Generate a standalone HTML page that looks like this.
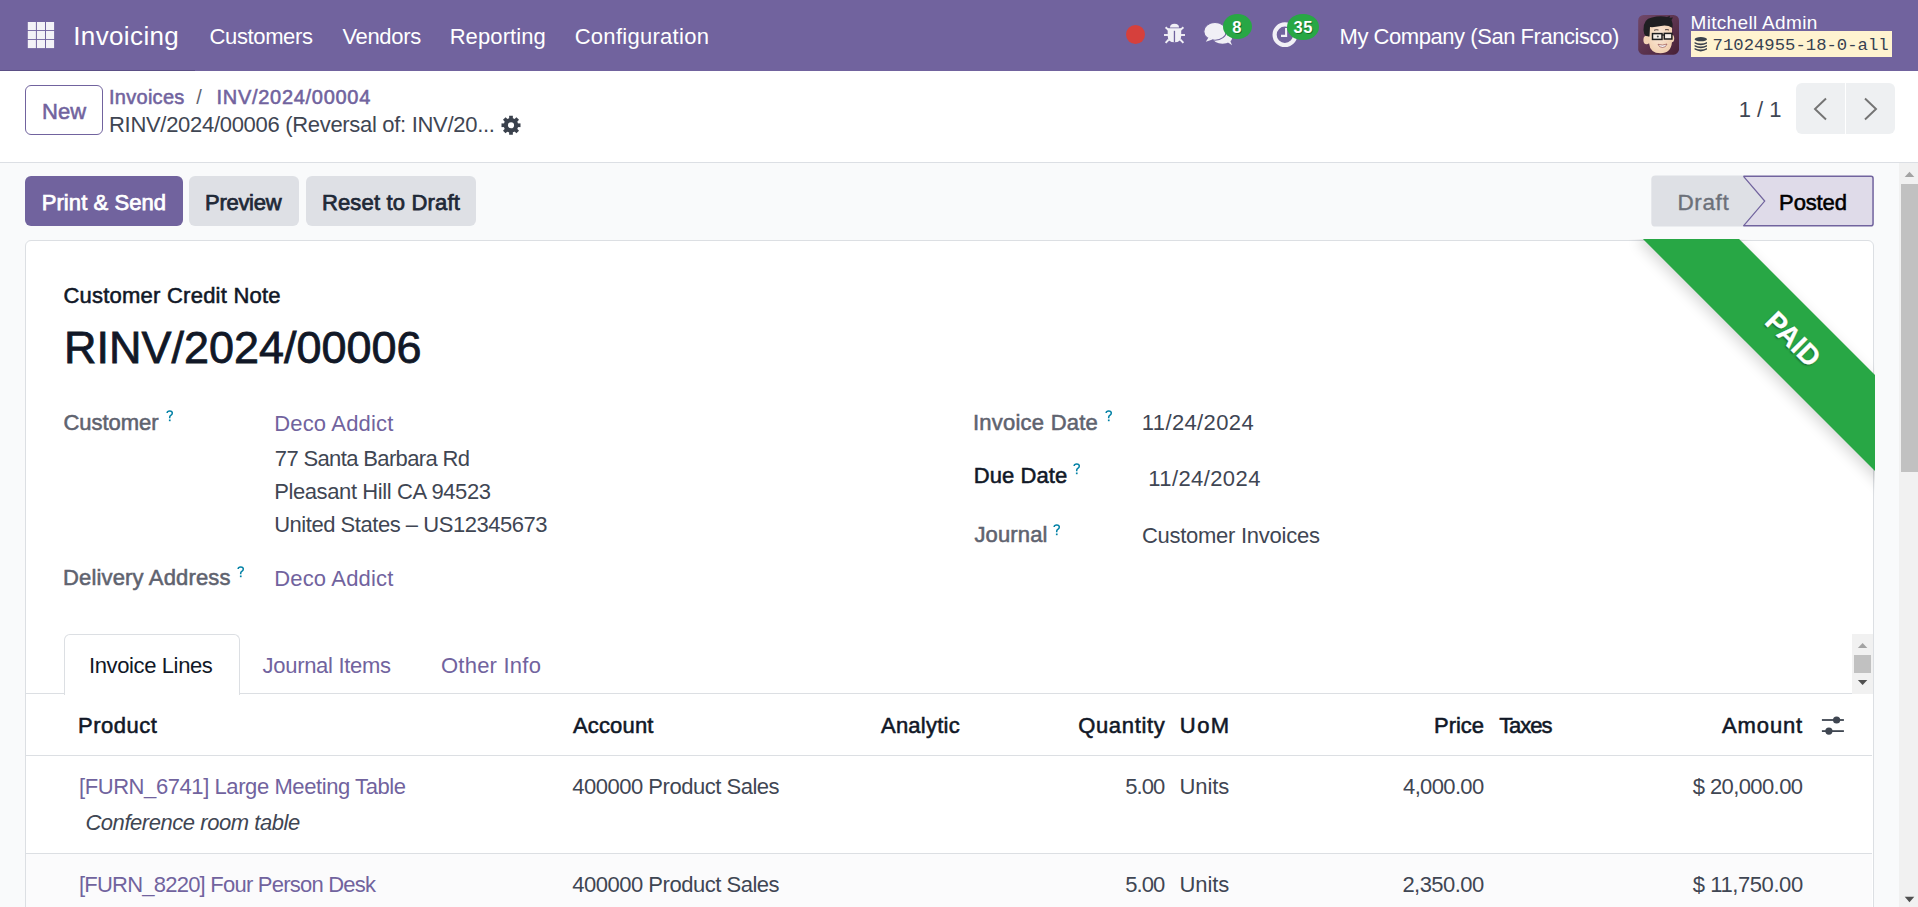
<!DOCTYPE html>
<html><head><meta charset="utf-8">
<style>
html,body{margin:0;padding:0;}
body{width:1918px;height:907px;overflow:hidden;position:relative;background:#f9fafb;font-family:"Liberation Sans",sans-serif;color:#374151;}
.t{position:absolute;white-space:nowrap;line-height:1;}
.b{font-weight:700;}
.abs{position:absolute;}
#nav{position:absolute;left:0;top:0;width:1918px;height:71px;background:#71639e;}
#nav .t{color:#fff;}
#cp{position:absolute;left:0;top:71px;width:1918px;height:91px;background:#fff;border-bottom:1px solid #dcdfe4;}
.btn{position:absolute;border-radius:6px;}
.lnk{color:#71639e;}
.lbl{color:#5f636f;font-weight:700;}
.q{position:absolute;color:#0180a5;font-size:15px;line-height:1;font-weight:400;-webkit-text-stroke:0.5px #0180a5;}
.dark{color:#111827;}
</style></head>
<body>
<!-- NAVBAR -->
<div id="nav">
  <div class="abs" style="left:0;top:70px;width:195px;height:1px;background:#5b4f85"></div>
  <svg class="abs" style="left:27px;top:22px" width="28" height="27" viewBox="0 0 28 27">
    <g fill="#f3f2f7">
      <rect x="0.8" y="0" width="8.1" height="8.1"/><rect x="9.9" y="0" width="8.1" height="8.1"/><rect x="19" y="0" width="8.1" height="8.1"/>
      <rect x="0.8" y="9" width="8.1" height="8.1"/><rect x="9.9" y="9" width="8.1" height="8.1"/><rect x="19" y="9" width="8.1" height="8.1"/>
      <rect x="0.8" y="18" width="8.1" height="8.1"/><rect x="9.9" y="18" width="8.1" height="8.1"/><rect x="19" y="18" width="8.1" height="8.1"/>
    </g>
  </svg>

  <!-- red dot -->
  <div class="abs" style="left:1125.5px;top:24.5px;width:19px;height:19px;border-radius:50%;background:#d6403c"></div>
  <!-- bug -->
  <svg class="abs" style="left:1160px;top:20px" width="28" height="26" viewBox="1160 20 28 26">
    <g fill="#f1f0f6">
      <path d="M1170 27.4 Q1170 23.8 1174.5 23.8 Q1179 23.8 1179 27.4 Z"/>
      <path d="M1167.7 28.3 H1181.2 V36 Q1181.2 42.3 1174.5 42.3 Q1167.7 42.3 1167.7 36 Z"/>
    </g>
    <g stroke="#f1f0f6" stroke-width="1.9" fill="none" stroke-linecap="butt">
      <path d="M1165.6 27.2 L1169 30.4"/><path d="M1183.4 27.2 L1180 30.4"/>
      <path d="M1164 35 H1168.5"/><path d="M1185 35 H1180.5"/>
      <path d="M1165.6 42.9 L1168.8 39.5"/><path d="M1183.4 42.9 L1180.2 39.5"/>
    </g>
    <path d="M1174.45 30.8 V42.4" stroke="#71639e" stroke-width="1.3"/>
  </svg>
  <!-- chat -->
  <svg class="abs" style="left:1200px;top:18px" width="36" height="30" viewBox="1200 18 36 30">
    <g fill="#f1f0f6">
      <ellipse cx="1222.5" cy="37.6" rx="9.8" ry="6.2"/>
      <path d="M1226 41 L1232 45.3 L1229.5 39 Z"/>
    </g>
    <ellipse cx="1215" cy="31.4" rx="11.2" ry="8.9" fill="#f1f0f6" stroke="#71639e" stroke-width="1.1"/>
    <path d="M1208.5 37.5 L1205.8 41.8 L1212.5 39.6 Z" fill="#f1f0f6"/>
  </svg>
  <div class="abs" style="left:1222.8px;top:14px;width:28.8px;height:25.4px;border-radius:50%;background:#28a745"></div>
  <!-- clock -->
  <svg class="abs" style="left:1268px;top:18px" width="34" height="32" viewBox="1268 18 34 32">
    <circle cx="1284.9" cy="34.7" r="10.3" fill="none" stroke="#f1f0f6" stroke-width="4.2"/>
    <path d="M1286.1 27.9 V35.9 H1281" fill="none" stroke="#f1f0f6" stroke-width="2.1"/>
  </svg>
  <div class="abs" style="left:1287.3px;top:14px;width:31.6px;height:26.4px;border-radius:50%;background:#28a745"></div>

  <!-- avatar -->
  <svg class="abs" style="left:1636px;top:13px" width="46" height="44" viewBox="1636 13 46 44">
    <defs><linearGradient id="av" x1="0" y1="0" x2="1" y2="1"><stop offset="0" stop-color="#714869"/><stop offset="1" stop-color="#482036"/></linearGradient>
    <radialGradient id="sk" cx="0.45" cy="0.45" r="0.6"><stop offset="0" stop-color="#fbe9da"/><stop offset="1" stop-color="#f1cfae"/></radialGradient></defs>
    <rect x="1638.2" y="14.9" width="40.8" height="39.8" rx="5.5" fill="url(#av)"/>
    <ellipse cx="1646.6" cy="40" rx="3.2" ry="4.2" fill="#f3d3b6"/>
    <ellipse cx="1671.8" cy="38.5" rx="2.4" ry="3.8" fill="#f3d3b6"/>
    <path d="M1648.5 27 Q1648 20 1660 20 Q1672 20 1672 28 L1672 42 Q1671 53.3 1660.5 53.3 Q1650 53.3 1649 43 Z" fill="url(#sk)"/>
    <path d="M1643.5 30 Q1643 19 1652 17.5 Q1660 15.5 1667 17 L1670 15.8 L1669.5 17.8 L1673 17.5 L1671.5 20 Q1673 23 1672.5 28 Q1667 24.5 1661 26 Q1653.5 27.5 1650 27 L1649.5 36.5 L1646 36 Q1643.5 34 1643.5 30 Z" fill="#1f1f22"/>
    <path d="M1654 30.3 Q1656 29.3 1658.5 30" stroke="#3a2a2a" stroke-width="0.9" fill="none"/>
    <path d="M1665 29.8 Q1667 29.2 1669 30" stroke="#3a2a2a" stroke-width="0.9" fill="none"/>
    <rect x="1652.5" y="33.6" width="9.5" height="5.8" fill="#f8f0ea" stroke="#1d1d1f" stroke-width="1.5"/>
    <rect x="1664.3" y="33.4" width="7.6" height="5.6" fill="#f8f0ea" stroke="#1d1d1f" stroke-width="1.5"/>
    <path d="M1662 35 H1664.3" stroke="#1d1d1f" stroke-width="1.2"/>
    <circle cx="1657.8" cy="36.5" r="1" fill="#555"/>
    <path d="M1658 44.3 Q1662.5 46 1667 44 Q1666 47.5 1662.5 47.5 Q1659 47.5 1658 44.3 Z" fill="#f4f4f4" stroke="#8a3a3a" stroke-width="0.6"/>
  </svg>
  <div class="abs" style="left:1691px;top:31px;width:201px;height:26px;background:#fff3d0"></div>
  <svg class="abs" style="left:1690px;top:33px" width="22" height="22" viewBox="1690 33 22 22">
    <g fill="#3a414c"><ellipse cx="1700.8" cy="39.2" rx="6.2" ry="2.1"/><path d="M1694.6 41.9 Q1700.8 44.9 1707 41.9 L1707 43.4 Q1700.8 47.0 1694.6 43.4 Z"/><path d="M1694.6 45.0 Q1700.8 48.0 1707 45.0 L1707 46.5 Q1700.8 50.1 1694.6 46.5 Z"/><path d="M1694.6 48.1 Q1700.8 51.1 1707 48.1 L1707 49.6 Q1700.8 53.2 1694.6 49.6 Z"/></g>
  </svg>
</div>

<!-- CONTROL PANEL -->
<div id="cp"></div>
<div class="btn" style="left:25px;top:85px;width:76px;height:48px;border:1px solid #71639e;background:#fff"></div>
<svg class="abs" style="left:499px;top:113px" width="24" height="24" viewBox="-12 -12 24 24">
  <g transform="translate(0 0.25)" fill="#3a414c"><path fill-rule="evenodd" d="M0 -7.3 A7.3 7.3 0 1 1 0 7.3 A7.3 7.3 0 1 1 0 -7.3 Z M0 -3.1 A3.1 3.1 0 1 0 0 3.1 A3.1 3.1 0 1 0 0 -3.1 Z"/><rect x="-1.85" y="-9.5" width="3.7" height="4" transform="rotate(0)"/><rect x="-1.85" y="-9.5" width="3.7" height="4" transform="rotate(45)"/><rect x="-1.85" y="-9.5" width="3.7" height="4" transform="rotate(90)"/><rect x="-1.85" y="-9.5" width="3.7" height="4" transform="rotate(135)"/><rect x="-1.85" y="-9.5" width="3.7" height="4" transform="rotate(180)"/><rect x="-1.85" y="-9.5" width="3.7" height="4" transform="rotate(225)"/><rect x="-1.85" y="-9.5" width="3.7" height="4" transform="rotate(270)"/><rect x="-1.85" y="-9.5" width="3.7" height="4" transform="rotate(315)"/></g>
</svg>
<div class="btn" style="left:1796px;top:83px;width:99px;height:51px;background:#eef0f2"></div>
<div class="abs" style="left:1845px;top:83px;width:1px;height:51px;background:#fff"></div>
<svg class="abs" style="left:1812px;top:97px" width="17" height="25" viewBox="0 0 17 25">
  <path d="M14 1.5 L3 12 L14 22.5" fill="none" stroke="#747474" stroke-width="1.95"/>
</svg>
<svg class="abs" style="left:1862px;top:97px" width="17" height="25" viewBox="0 0 17 25">
  <path d="M3 1.5 L14 12 L3 22.5" fill="none" stroke="#747474" stroke-width="1.95"/>
</svg>

<!-- ACTION BUTTONS -->
<div class="btn" style="left:25px;top:176px;width:158px;height:50px;background:#71639e"></div>
<div class="btn" style="left:189px;top:176px;width:110px;height:50px;background:#dee0e5"></div>
<div class="btn" style="left:306px;top:176px;width:170px;height:50px;background:#dee0e5"></div>

<!-- STATUSBAR -->
<svg class="abs" style="left:1640px;top:165px" width="245" height="70" viewBox="1640 165 245 70">
  <path d="M1655.5 175.6 H1744 L1765.2 201.1 L1744 226.6 H1655.5 Q1651.3 226.6 1651.3 222.4 V179.8 Q1651.3 175.6 1655.5 175.6 Z" fill="#dee0e5"/>
  <path d="M1743.5 176.35 H1871 Q1873.05 176.35 1873.05 178.4 V223.8 Q1873.05 225.85 1871 225.85 H1743.5 L1764.7 201.1 Z" fill="#dfdbe9"/>
  <path d="M1743.5 176.35 H1871 Q1873.05 176.35 1873.05 178.4 V223.8 Q1873.05 225.85 1871 225.85 H1743.5" fill="none" stroke="#71639e" stroke-width="1.5"/>
  <path d="M1743.5 176.35 L1764.7 201.1 L1743.5 225.85" fill="none" stroke="#71639e" stroke-width="1.25"/>
</svg>
<!-- SCROLLBAR -->
<div class="abs" style="left:1899px;top:163px;width:19px;height:744px;background:#f1f1f1"></div>
<div class="abs" style="left:1901px;top:184px;width:17px;height:288px;background:#c1c1c1"></div>
<svg class="abs" style="left:1899px;top:165px" width="19" height="16" viewBox="1899 165 19 16"><path d="M1904.7 177.1 L1909.5 171.7 L1914.3 177.1 Z" fill="#a3a3a3"/></svg>
<svg class="abs" style="left:1899px;top:892px" width="19" height="15" viewBox="1899 892 19 15"><path d="M1904.7 896.8 L1914.3 896.8 L1909.5 902.2 Z" fill="#505050"/></svg>

<!-- SHEET -->
<div class="abs" style="left:25px;top:240px;width:1847px;height:700px;background:#fff;border:1px solid #dcdfe3;border-radius:6px;overflow:hidden">
</div>









<svg class="abs" style="left:165.9px;top:410.2px" width="8" height="12" viewBox="0 0 8 12"><path d="M1.1 3 Q1.3 0.9 3.7 0.9 Q6.3 0.9 6.3 3.1 Q6.3 4.5 4.8 5.4 Q3.7 6.1 3.7 7.3 V8.3" fill="none" stroke="#0180a5" stroke-width="1.5"/><rect x="2.9" y="9.5" width="1.7" height="1.7" fill="#0180a5"/></svg>
<svg class="abs" style="left:236.5px;top:566.0px" width="8" height="12" viewBox="0 0 8 12"><path d="M1.1 3 Q1.3 0.9 3.7 0.9 Q6.3 0.9 6.3 3.1 Q6.3 4.5 4.8 5.4 Q3.7 6.1 3.7 7.3 V8.3" fill="none" stroke="#0180a5" stroke-width="1.5"/><rect x="2.9" y="9.5" width="1.7" height="1.7" fill="#0180a5"/></svg>
<svg class="abs" style="left:1104.5px;top:409.8px" width="8" height="12" viewBox="0 0 8 12"><path d="M1.1 3 Q1.3 0.9 3.7 0.9 Q6.3 0.9 6.3 3.1 Q6.3 4.5 4.8 5.4 Q3.7 6.1 3.7 7.3 V8.3" fill="none" stroke="#0180a5" stroke-width="1.5"/><rect x="2.9" y="9.5" width="1.7" height="1.7" fill="#0180a5"/></svg>
<svg class="abs" style="left:1073.2px;top:462.6px" width="8" height="12" viewBox="0 0 8 12"><path d="M1.1 3 Q1.3 0.9 3.7 0.9 Q6.3 0.9 6.3 3.1 Q6.3 4.5 4.8 5.4 Q3.7 6.1 3.7 7.3 V8.3" fill="none" stroke="#0180a5" stroke-width="1.5"/><rect x="2.9" y="9.5" width="1.7" height="1.7" fill="#0180a5"/></svg>
<svg class="abs" style="left:1052.6px;top:523.8px" width="8" height="12" viewBox="0 0 8 12"><path d="M1.1 3 Q1.3 0.9 3.7 0.9 Q6.3 0.9 6.3 3.1 Q6.3 4.5 4.8 5.4 Q3.7 6.1 3.7 7.3 V8.3" fill="none" stroke="#0180a5" stroke-width="1.5"/><rect x="2.9" y="9.5" width="1.7" height="1.7" fill="#0180a5"/></svg>
<!-- TABS -->
<div class="abs" style="left:26px;top:693px;width:1826px;height:1px;background:#dcdfe3"></div>
<div class="abs" style="left:64px;top:634px;width:174px;height:60px;background:#fff;border:1px solid #dcdfe3;border-bottom:none;border-radius:6px 6px 0 0"></div>
<div class="abs" style="left:1852px;top:634px;width:20.8px;height:60px;background:#f1f1f1"></div>
<div class="abs" style="left:1854px;top:655px;width:17px;height:17.7px;background:#c1c1c1"></div>
<svg class="abs" style="left:1852px;top:638px" width="20" height="14" viewBox="1852 638 20 14"><path d="M1857.9 648 L1862.6 642.9 L1867.3 648 Z" fill="#a3a3a3"/></svg>
<svg class="abs" style="left:1852px;top:676px" width="20" height="14" viewBox="1852 676 20 14"><path d="M1857.9 679.9 L1867.3 679.9 L1862.6 685.1 Z" fill="#505050"/></svg>

<!-- TABLE -->
<svg class="abs" style="left:1815px;top:708px" width="40" height="34" viewBox="1815 708 40 34">
  <g stroke="#3f4651" stroke-width="1.8"><path d="M1821.9 720 H1843.9"/><path d="M1821.9 731.1 H1843.9"/></g>
  <circle cx="1836.6" cy="720" r="3.6" fill="#3f4651"/><circle cx="1828.9" cy="731.1" r="3.6" fill="#3f4651"/>
</svg>
<div class="abs" style="left:26px;top:755px;width:1846px;height:1px;background:#dcdfe3"></div>

<div class="abs" style="left:26px;top:853px;width:1846px;height:1px;background:#dcdfe3"></div>
<div class="abs" style="left:26px;top:854px;width:1846px;height:53px;background:#fbfbfc"></div>

<!-- RIBBON -->
<div class="abs" style="left:1500px;top:239px;width:375px;height:300px;overflow:hidden">
  <div class="abs" style="left:113px;top:67.75px;width:360px;height:68px;background:#28a745;transform:rotate(45deg);box-shadow:0 5px 14px rgba(0,0,0,.16);text-align:center;">
    <div style="position:relative;left:-1.2px;top:-1.2px;color:#fff;font-weight:700;font-size:28px;line-height:68px;-webkit-text-stroke:0.3px #fff;text-shadow:0 1.5px 2px rgba(0,0,0,.4)">PAID</div>
  </div>
</div>
<div class="t" style="left:73.26px;top:23px;font-size:26.00px;color:#fff;letter-spacing:0.370px">Invoicing</div>
<div class="t" style="left:209.50px;top:26px;font-size:22.00px;color:#fff;letter-spacing:-0.363px">Customers</div>
<div class="t" style="left:342.38px;top:26px;font-size:22.00px;color:#fff;letter-spacing:-0.323px">Vendors</div>
<div class="t" style="left:449.64px;top:26px;font-size:22.00px;color:#fff;letter-spacing:0.102px">Reporting</div>
<div class="t" style="left:574.70px;top:26px;font-size:22.00px;color:#fff;letter-spacing:0.278px">Configuration</div>
<div class="t" style="left:1232.31px;top:19px;font-size:16.50px;color:#fff;font-weight:700;text-shadow:1px 1px 0 rgba(0,40,0,.45)">8</div>
<div class="t" style="left:1293.47px;top:19px;font-size:16.50px;color:#fff;letter-spacing:0.610px;font-weight:700;text-shadow:1px 1px 0 rgba(0,40,0,.45)">35</div>
<div class="t" style="left:1339.54px;top:26px;font-size:22.00px;color:#fff;letter-spacing:-0.450px">My Company (San Francisco)</div>
<div class="t" style="left:1690.48px;top:13px;font-size:19.00px;color:#fff;letter-spacing:0.331px">Mitchell Admin</div>
<div class="t" style="left:1712.62px;top:37px;font-size:17.25px;color:#374151;font-family:'Liberation Mono',monospace">71024955-18-0-all</div>
<div class="t" style="left:42.12px;top:101px;font-size:22.00px;color:#71639e;letter-spacing:-0.045px;-webkit-text-stroke:0.55px #71639e">New</div>
<div class="t" style="left:108.98px;top:87px;font-size:20.00px;color:#71639e;letter-spacing:0.279px;-webkit-text-stroke:0.55px #71639e">Invoices</div>
<div class="t" style="left:196.20px;top:87px;font-size:20.00px;color:#5f636f">/</div>
<div class="t" style="left:216.57px;top:87px;font-size:20.00px;color:#71639e;letter-spacing:0.704px;-webkit-text-stroke:0.55px #71639e">INV/2024/00004</div>
<div class="t" style="left:109.04px;top:114px;font-size:22.00px;color:#3f4653;letter-spacing:-0.305px">RINV/2024/00006 (Reversal of: INV/20...</div>
<div class="t" style="left:1738.84px;top:99px;font-size:22.00px;color:#3f4653;letter-spacing:-0.060px">1 / 1</div>
<div class="t" style="left:41.72px;top:192px;font-size:22.00px;color:#fff;letter-spacing:0.074px;-webkit-text-stroke:0.75px #fff">Print &amp; Send</div>
<div class="t" style="left:205.02px;top:192px;font-size:22.00px;color:#1f2937;letter-spacing:-0.285px;-webkit-text-stroke:0.75px #1f2937">Preview</div>
<div class="t" style="left:321.92px;top:192px;font-size:22.00px;color:#1f2937;letter-spacing:0.168px;-webkit-text-stroke:0.75px #1f2937">Reset to Draft</div>
<div class="t" style="left:1677.38px;top:192px;font-size:22.50px;color:#6c7079;letter-spacing:0.638px;-webkit-text-stroke:0.35px #6c7079">Draft</div>
<div class="t" style="left:1779.12px;top:192px;font-size:22.00px;color:#000;letter-spacing:-0.138px;-webkit-text-stroke:0.55px #000">Posted</div>
<div class="t" style="left:63.38px;top:285px;font-size:22.00px;color:#111827;letter-spacing:0.236px;-webkit-text-stroke:0.55px #111827">Customer Credit Note</div>
<div class="t" style="left:64.00px;top:326px;font-size:44.96px;color:#111827;-webkit-text-stroke:0.8px #111827">RINV/2024/00006</div>
<div class="t" style="left:63.47px;top:412px;font-size:22.00px;color:#5f636f;letter-spacing:-0.027px;-webkit-text-stroke:0.55px #5f636f">Customer</div>
<div class="t" style="left:274.14px;top:413px;font-size:22.00px;color:#71639e;letter-spacing:0.190px">Deco Addict</div>
<div class="t" style="left:274.80px;top:448px;font-size:22.00px;color:#3f4653;letter-spacing:-0.637px">77 Santa Barbara Rd</div>
<div class="t" style="left:274.14px;top:481px;font-size:22.00px;color:#3f4653;letter-spacing:-0.387px">Pleasant Hill CA 94523</div>
<div class="t" style="left:274.14px;top:514px;font-size:22.00px;color:#3f4653;letter-spacing:-0.462px">United States – US12345673</div>
<div class="t" style="left:63.02px;top:567px;font-size:22.00px;color:#5f636f;letter-spacing:0.158px;-webkit-text-stroke:0.55px #5f636f">Delivery Address</div>
<div class="t" style="left:274.14px;top:568px;font-size:22.00px;color:#71639e;letter-spacing:0.190px">Deco Addict</div>
<div class="t" style="left:972.89px;top:412px;font-size:22.00px;color:#5f636f;letter-spacing:0.245px;-webkit-text-stroke:0.55px #5f636f">Invoice Date</div>
<div class="t" style="left:1141.84px;top:412px;font-size:22.00px;color:#3f4653;letter-spacing:0.373px">11/24/2024</div>
<div class="t" style="left:973.81px;top:465px;font-size:22.00px;color:#111827;letter-spacing:0.079px;-webkit-text-stroke:0.55px #111827">Due Date</div>
<div class="t" style="left:1148.24px;top:468px;font-size:22.00px;color:#3f4653;letter-spacing:0.407px">11/24/2024</div>
<div class="t" style="left:974.43px;top:524px;font-size:22.00px;color:#5f636f;letter-spacing:0.145px;-webkit-text-stroke:0.55px #5f636f">Journal</div>
<div class="t" style="left:1141.90px;top:525px;font-size:22.00px;color:#3f4653;letter-spacing:-0.261px">Customer Invoices</div>
<div class="t" style="left:88.92px;top:655px;font-size:22.00px;color:#111827;letter-spacing:-0.372px">Invoice Lines</div>
<div class="t" style="left:262.56px;top:655px;font-size:22.00px;color:#71639e;letter-spacing:-0.292px">Journal Items</div>
<div class="t" style="left:441.00px;top:655px;font-size:22.00px;color:#71639e;letter-spacing:0.231px">Other Info</div>
<div class="t" style="left:78.11px;top:715px;font-size:22.00px;color:#111827;letter-spacing:0.488px;-webkit-text-stroke:0.55px #111827">Product</div>
<div class="t" style="left:572.88px;top:715px;font-size:22.00px;color:#111827;letter-spacing:0.172px;-webkit-text-stroke:0.55px #111827">Account</div>
<div class="t" style="left:880.98px;top:715px;font-size:22.00px;color:#111827;letter-spacing:0.241px;-webkit-text-stroke:0.55px #111827">Analytic</div>
<div class="t" style="left:1078.18px;top:715px;font-size:22.00px;color:#111827;letter-spacing:0.673px;-webkit-text-stroke:0.55px #111827">Quantity</div>
<div class="t" style="left:1179.82px;top:715px;font-size:22.00px;color:#111827;letter-spacing:1.425px;-webkit-text-stroke:0.55px #111827">UoM</div>
<div class="t" style="left:1434.12px;top:715px;font-size:22.00px;color:#111827;letter-spacing:-0.042px;-webkit-text-stroke:0.55px #111827">Price</div>
<div class="t" style="left:1499.13px;top:715px;font-size:22.00px;color:#111827;letter-spacing:-1.042px;-webkit-text-stroke:0.55px #111827">Taxes</div>
<div class="t" style="left:1722.08px;top:715px;font-size:22.00px;color:#111827;letter-spacing:0.854px;-webkit-text-stroke:0.55px #111827">Amount</div>
<div class="t" style="left:78.96px;top:776px;font-size:22.00px;color:#71639e;letter-spacing:-0.418px">[FURN_6741] Large Meeting Table</div>
<div class="t" style="left:572.16px;top:776px;font-size:22.00px;color:#3f4653;letter-spacing:-0.477px">400000 Product Sales</div>
<div class="t" style="left:1125.22px;top:776px;font-size:22.00px;color:#3f4653;letter-spacing:-0.913px">5.00</div>
<div class="t" style="left:1179.54px;top:776px;font-size:22.00px;color:#3f4653;letter-spacing:-0.105px">Units</div>
<div class="t" style="left:1403.06px;top:776px;font-size:22.00px;color:#3f4653;letter-spacing:-0.640px">4,000.00</div>
<div class="t" style="left:1692.78px;top:776px;font-size:22.00px;color:#3f4653;letter-spacing:-0.598px">$ 20,000.00</div>
<div class="t" style="left:85.40px;top:812px;font-size:22.00px;color:#3f4653;letter-spacing:-0.448px;font-style:italic">Conference room table</div>
<div class="t" style="left:78.96px;top:874px;font-size:22.00px;color:#71639e;letter-spacing:-0.773px">[FURN_8220] Four Person Desk</div>
<div class="t" style="left:572.16px;top:874px;font-size:22.00px;color:#3f4653;letter-spacing:-0.477px">400000 Product Sales</div>
<div class="t" style="left:1125.22px;top:874px;font-size:22.00px;color:#3f4653;letter-spacing:-0.913px">5.00</div>
<div class="t" style="left:1179.54px;top:874px;font-size:22.00px;color:#3f4653;letter-spacing:-0.105px">Units</div>
<div class="t" style="left:1402.40px;top:874px;font-size:22.00px;color:#3f4653;letter-spacing:-0.546px">2,350.00</div>
<div class="t" style="left:1692.78px;top:874px;font-size:22.00px;color:#3f4653;letter-spacing:-0.422px">$ 11,750.00</div>
</body></html>
